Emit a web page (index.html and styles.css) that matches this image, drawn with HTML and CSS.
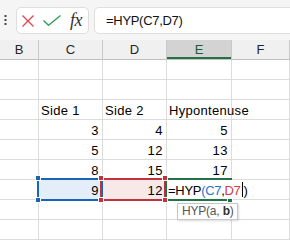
FILE: index.html
```html
<html lang="en">
<head>
    <meta charset="UTF-8">
    <title>HYP</title>
    <link rel="stylesheet" href="styles.css">
</head>
<body>
<div class="fbar">
    <svg class="dots" width="3" height="10" viewBox="0 0 3 10">
        <rect x="0.5" y="0" width="2" height="2" fill="#444"/>
        <rect x="0.5" y="4" width="2" height="2" fill="#444"/>
        <rect x="0.5" y="8" width="2" height="2" fill="#444"/>
    </svg>
    <div class="fbtns">
        <svg class="ic-x" width="12" height="12" viewBox="0 0 12 12">
            <path d="M0.5 0.5 L11.5 11.5 M11.5 0.5 L0.5 11.5" stroke="#e5434c" stroke-width="1.3" fill="none"/>
        </svg>
        <svg class="ic-ok" width="18" height="11" viewBox="0 0 18 11">
            <path d="M0.5 5.5 L5.5 10.3 L17.5 0.5" stroke="#2f9e52" stroke-width="1.3" fill="none"/>
        </svg>
        <span class="fx">fx</span>
    </div>
    <div class="finput">=HYP(C7,D7)</div>
</div>

<div class="sheet">
    <div class="hd">B</div><div class="hd">C</div><div class="hd">D</div><div class="hd hd-on">E</div><div class="hd">F</div>

    <div class="c"></div><div class="c"></div><div class="c"></div><div class="c"></div><div class="c"></div>
    <div class="c"></div><div class="c"></div><div class="c"></div><div class="c"></div><div class="c"></div>
    <div class="c"></div><div class="c">Side 1</div><div class="c">Side 2</div><div class="c">Hypontenuse</div><div class="c"></div>
    <div class="c"></div><div class="c num">3</div><div class="c num">4</div><div class="c num">5</div><div class="c"></div>
    <div class="c"></div><div class="c num">5</div><div class="c num">12</div><div class="c num">13</div><div class="c"></div>
    <div class="c"></div><div class="c num">8</div><div class="c num">15</div><div class="c num">17</div><div class="c"></div>
    <div class="c"></div><div class="c num ref-blue">9</div><div class="c num ref-red">12</div><div class="c"></div><div class="c"></div>
    <div class="c"></div><div class="c"></div><div class="c"></div><div class="c"></div><div class="c"></div>
    <div class="c"></div><div class="c"></div><div class="c"></div><div class="c"></div><div class="c"></div>

    <div class="box box-blue"></div>
    <div class="box box-red"></div>
    <div class="box box-green"></div>
    <div class="knob knob-blue k1"></div>
    <div class="knob knob-blue k2"></div>
    <div class="knob knob-red k3"></div>
    <div class="knob knob-red k4"></div>
    <div class="knob knob-red k5"></div>
    <div class="knob knob-red k6"></div>
    <div class="knob knob-green k7"></div>

    <div class="edit">=HYP<span class="t-blue">(C7</span>,<span class="t-red">D7</span><span class="caret"></span>)</div>
    <div class="tip">HYP(a, <b>b</b>)</div>
</div>
</body>
</html>
```

FILE: styles.css
```css
body {
    margin: 0;
    overflow: hidden;
    background: #ffffff;
    font-family: "Liberation Sans", Arial, sans-serif;
}

.fbar {
    display: flex;
    align-items: flex-start;
    height: 40px;
    background: #f5f5f5;
}
.dots {
    margin: 15px 0 0 4px;
}
.fbtns {
    display: flex;
    align-items: center;
    box-sizing: border-box;
    width: 73px;
    height: 27px;
    margin: 7px 0 0 9px;
    padding-left: 5px;
    background: #fff;
    border: 1px solid #dedede;
    border-radius: 5px;
}
.ic-x {
    margin-top: 1px;
}
.ic-ok {
    margin-left: 9px;
}
.fx {
    margin-left: 9px;
    font-family: "Liberation Serif", serif;
    font-style: italic;
    font-size: 18px;
    color: #333;
    letter-spacing: -0.5px;
}
.finput {
    box-sizing: border-box;
    flex: 1;
    height: 27px;
    margin: 7px -10px 0 5px;
    padding-left: 11px;
    background: #fff;
    border: 1px solid #dedede;
    border-radius: 5px;
    font-size: 13px;
    line-height: 26px;
    letter-spacing: -0.3px;
    color: #111;
}

.sheet {
    position: relative;
    display: grid;
    grid-template-columns: 39px 64px 64px 65px 1fr;
    grid-auto-rows: 20px;
    font-size: 13px;
    letter-spacing: 0.3px;
    color: #000;
}
.hd {
    box-sizing: border-box;
    background: #f0f0f0;
    border-right: 1px solid #c8c8c8;
    border-bottom: 1px solid #c0c0c0;
    text-align: center;
    line-height: 19px;
    color: #262626;
    letter-spacing: 0;
}
.hd-on {
    background: #d3d3d3;
    color: #1b5c38;
    box-shadow: inset 0 -2px 0 #217346;
}
.c {
    box-sizing: border-box;
    border-right: 1px solid #dcdcdc;
    border-bottom: 1px solid #dcdcdc;
    padding: 0 3px 0 2px;
    line-height: 21px;
    white-space: nowrap;
}
.num {
    text-align: right;
    letter-spacing: 0.5px;
}
.ref-blue {
    background: #e4eef8;
}
.ref-red {
    background: #f9e8e8;
}

.box {
    position: absolute;
    top: 138px;
    box-sizing: border-box;
    height: 23px;
}
.box-blue {
    left: 37px;
    width: 66px;
    border: 2px solid #1865b8;
}
.box-red {
    left: 100px;
    width: 66px;
    border: 2px solid #c2323c;
}
.box-green {
    left: 165px;
    width: 67px;
    border: 2px solid #217346;
    border-right: none;
}
.knob {
    position: absolute;
    box-sizing: border-box;
    width: 6px;
    height: 6px;
    border: 1px solid #fff;
}
.knob-blue { background: #1865b8; }
.knob-red { background: #c2323c; }
.knob-green { background: #217346; }
.k1 { left: 35px; top: 135px; }
.k2 { left: 35px; top: 157px; }
.k3 { left: 98px; top: 135px; }
.k4 { left: 98px; top: 157px; }
.k5 { left: 162px; top: 135px; }
.k6 { left: 162px; top: 157px; }
.k7 { left: 227px; top: 157px; }

.edit {
    position: absolute;
    left: 167px;
    top: 140px;
    height: 19px;
    padding: 0 2px 0 1px;
    background: #fff;
    line-height: 21px;
    letter-spacing: -0.3px;
    white-space: nowrap;
}
.t-blue { color: #2a74cc; }
.t-red { color: #d03a40; }
.caret {
    display: inline-block;
    width: 1px;
    height: 15px;
    margin: 0 1px -2px 1px;
    background: #000;
}
.tip {
    position: absolute;
    left: 177px;
    top: 163px;
    box-sizing: border-box;
    width: 61px;
    height: 17px;
    padding-left: 4px;
    background: #fff;
    border: 1px solid #c6c6c6;
    box-shadow: 1px 1px 2px rgba(0, 0, 0, 0.15);
    font-size: 12px;
    line-height: 15px;
    letter-spacing: -0.2px;
    color: #555;
}
.tip b {
    color: #333;
}
```
